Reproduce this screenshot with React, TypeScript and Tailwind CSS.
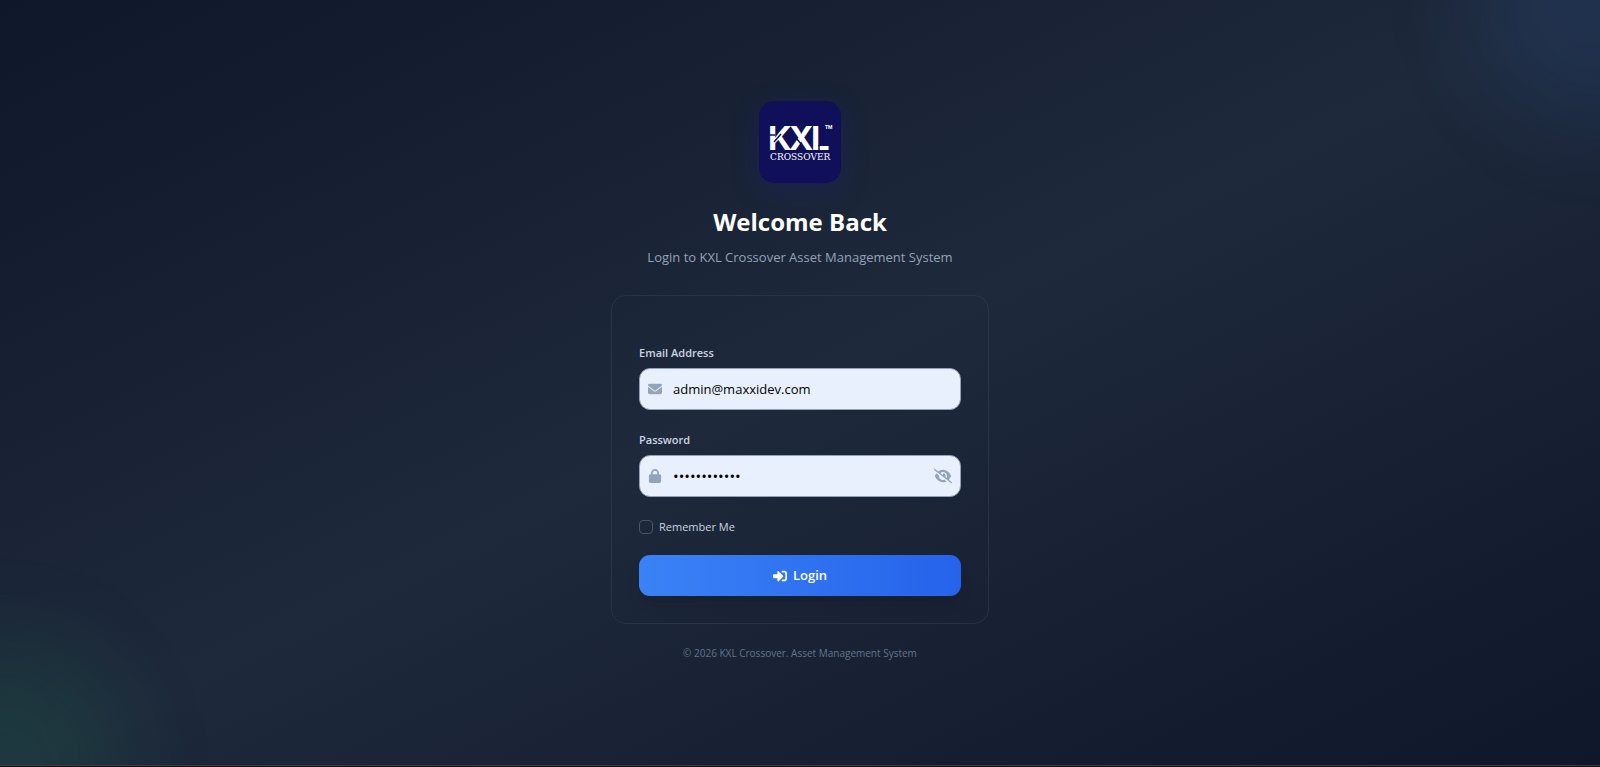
import { useState } from "react";
import type { ReactNode } from "react";
import { FaEnvelope, FaEye, FaEyeSlash, FaLock } from "react-icons/fa6";
import { FaSignInAlt } from "react-icons/fa";

const fieldClass =
  "h-[42px] w-full rounded-[11px] border border-slate-400 bg-[#e8f0fe] pl-[33px] text-black outline-none";

function KxlLogo() {
  return (
    <svg viewBox="0 0 82 82" className="size-[82px] rounded-[15px] bg-[#10105a] shadow-[0_8px_28px_rgba(30,27,150,0.25)]" role="img" aria-label="KXL Crossover">
      <text x="9 30 52" y="49" fontSize="33" fontWeight="700" fill="#fff" fontFamily="Inter, sans-serif">KXL</text>
      {/* stencil cuts */}
      <path d="M9 34 H16 M15 41 L22 33 M32 31 L43 44 M60 44 V50" stroke="#10105a" strokeWidth="1.5" fill="none" />
      <text x="66" y="28" fontSize="5" fontWeight="700" fill="#fff" fontFamily="Roboto, sans-serif">TM</text>
      <text x="11" y="59" fontSize="9" fill="#fff" fontFamily="'DejaVu Serif', serif">CROSSOVER</text>
    </svg>
  );
}

function Field({ id, label, icon, children }: { id: string; label: string; icon: ReactNode; children: ReactNode }) {
  return (
    <div>
      <label htmlFor={id} className="block text-[11px] leading-[18px] font-semibold text-[#cbd5e1]">{label}</label>
      <div className="relative mt-[6px]">
        <span className="pointer-events-none absolute inset-y-0 left-[9px] flex items-center text-[#94a3b8]">{icon}</span>
        {children}
      </div>
    </div>
  );
}

export default function App() {
  const [email, setEmail] = useState("admin@maxxidev.com");
  const [password, setPassword] = useState("maxxidev2026");
  const [visible, setVisible] = useState(false);
  const [remember, setRemember] = useState(false);

  return (
    <div className="flex min-h-screen flex-col font-['Open_Sans','Noto_Sans',sans-serif]">
      <main className="relative flex flex-1 items-center justify-center overflow-hidden bg-linear-to-br/srgb from-[#0f172a] via-[#1e293b] to-[#0f172a] pb-[2px]">
        <div className="absolute -top-32 -right-32 size-64 rounded-full bg-[#3b82f6]/10 blur-[44px]" />
        <div className="absolute -bottom-32 -left-32 size-64 rounded-full bg-[#22c55e]/10 blur-[44px]" />

        <div className="relative w-full max-w-[378px]">
          <header className="flex flex-col items-center text-center">
            <KxlLogo />
            <h1 className="mt-[21px] text-[24px] leading-9 font-bold text-white">Welcome Back</h1>
            <p className="mt-[7px] text-[13px] leading-5 text-[#94a3b8]">Login to KXL Crossover Asset Management System</p>
          </header>

          <form onSubmit={(e) => e.preventDefault()} className="mt-7 rounded-[15px] border border-[#334155]/50 px-[27px] pt-12 pb-[27px]">
            <Field id="email" label="Email Address" icon={<FaEnvelope size={14} />}>
              <input id="email" type="email" value={email} onChange={(e) => setEmail(e.target.value)} className={`${fieldClass} text-[13px]`} />
            </Field>
            <div className="mt-[21px]">
              <Field id="password" label="Password" icon={<FaLock size={14} />}>
                <input id="password" type={visible ? "text" : "password"} value={password} onChange={(e) => setPassword(e.target.value)} className={`${fieldClass} text-[15px]`} />
                <button type="button" aria-label="Toggle password visibility" onClick={() => setVisible(!visible)} className="absolute inset-y-0 right-[9px] flex items-center text-[#94a3b8]">
                  {visible ? <FaEye size={18} /> : <FaEyeSlash size={18} />}
                </button>
              </Field>
            </div>
            <label className="mt-5 flex items-center gap-[6px] text-[11px] leading-5 text-[#cbd5e1]">
              <input type="checkbox" checked={remember} onChange={(e) => setRemember(e.target.checked)} className="size-[14px] appearance-none rounded-[4px] border border-[#475569] checked:bg-[#3b82f6]" />
              Remember Me
            </label>
            <button type="submit" className="mt-[18px] flex h-[41px] w-full items-center justify-center gap-[6px] rounded-[11px] bg-linear-to-r/srgb from-[#3b82f6] to-[#2563eb] text-[13px] font-semibold text-white shadow-lg">
              <FaSignInAlt size={14} />
              Login
            </button>
          </form>

          <footer className="mt-5 text-center text-[10px] leading-[18px] text-[#64748b]">© 2026 KXL Crossover. Asset Management System</footer>
        </div>
      </main>
      <div className="h-[2px] border-t border-[#3c3c3c] bg-[#1c1016]" />
    </div>
  );
}
